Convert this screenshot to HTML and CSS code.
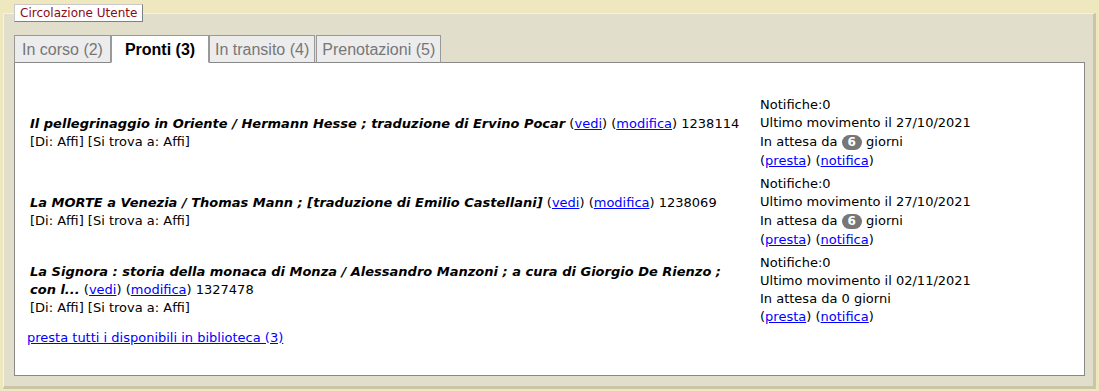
FILE: index.html
```html
<!DOCTYPE html>
<html lang="it">
<head>
  <meta charset="UTF-8" />
  <title>Circolazione Utente</title>
  <link rel="stylesheet" href="styles.css">
</head>
<body>
  <fieldset class="box">
    <legend class="box-title">Circolazione Utente</legend>

    <div class="tabs">
      <a class="tab">In corso (2)</a>
      <a class="tab active">Pronti (3)</a>
      <a class="tab">In transito (4)</a>
      <a class="tab">Prenotazioni (5)</a>
    </div>

    <div class="panel">
      <table class="items">
        <tr>
          <td class="item">
            <b><i>Il pellegrinaggio in Oriente / Hermann Hesse ; traduzione di Ervino Pocar</i></b>
            (<a href="#">vedi</a>) (<a href="#">modifica</a>) 1238114<br>
            [Di: Affi] [Si trova a: Affi]
          </td>
          <td class="info">
            Notifiche:0<br>
            Ultimo movimento il 27/10/2021<br>
            <span class="wait">In attesa da <span class="badge">6</span> giorni</span><br>
            (<a href="#">presta</a>) (<a href="#">notifica</a>)
          </td>
        </tr>
        <tr>
          <td class="item">
            <b><i>La MORTE a Venezia / Thomas Mann ; [traduzione di Emilio Castellani]</i></b>
            (<a href="#">vedi</a>) (<a href="#">modifica</a>) 1238069<br>
            [Di: Affi] [Si trova a: Affi]
          </td>
          <td class="info">
            Notifiche:0<br>
            Ultimo movimento il 27/10/2021<br>
            <span class="wait">In attesa da <span class="badge">6</span> giorni</span><br>
            (<a href="#">presta</a>) (<a href="#">notifica</a>)
          </td>
        </tr>
        <tr>
          <td class="item">
            <b><i>La Signora : storia della monaca di Monza / Alessandro Manzoni ; a cura di Giorgio De Rienzo ; <span class="nowrap">con l...</span></i></b>
            (<a href="#">vedi</a>) (<a href="#">modifica</a>) 1327478<br>
            [Di: Affi] [Si trova a: Affi]
          </td>
          <td class="info">
            Notifiche:0<br>
            Ultimo movimento il 02/11/2021<br>
            In attesa da 0 giorni<br>
            (<a href="#">presta</a>) (<a href="#">notifica</a>)
          </td>
        </tr>
      </table>
      <a class="lend-all" href="#">presta tutti i disponibili in biblioteca (3)</a>
    </div>
  </fieldset>
</body>
</html>
```

FILE: styles.css
```css
body {
  margin: 0;
  padding: 4px 3px 3px 3px;
  background-color: #efe8bf;
  font-family: "DejaVu Sans", Verdana, sans-serif;
  font-size: 12px;
  color: #000;
}

a {
  color: #0000ff;
}

.box {
  margin: 0;
  padding: 13px 8px 10px 10px;
  background-color: #e1dfcc;
  border-top: 1px solid #f6f3de;
  border-left: 1px solid #f6f3de;
  border-right: 3px solid #c9c5a6;
  border-bottom: 3px solid #c9c5a6;
}

.box-title {
  padding: 0 5px;
  height: 18px;
  line-height: 17px;
  box-sizing: border-box;
  background-color: #fff;
  color: #8b0a14;
  border-top: 1px solid #c8c8c8;
  border-left: 1px solid #c8c8c8;
  border-right: 1px solid #808080;
  border-bottom: 1px solid #808080;
}

.tabs {
  display: flex;
  position: relative;
  margin-bottom: -1px;
}

.tab {
  box-sizing: border-box;
  min-width: 97px;
  height: 28px;
  padding: 0 5px;
  line-height: 27px;
  text-align: center;
  font-family: "Liberation Sans", Arial, sans-serif;
  font-size: 16px;
  color: #777;
  background-color: #ececec;
  border: 1px solid #999;
  border-bottom-color: #888;
  margin-right: 1px;
  text-decoration: none;
}

.tab.active {
  min-width: 98px;
  margin-left: -1px;
  margin-right: 0;
  font-weight: bold;
  color: #000;
  background-color: #fff;
  border-left-color: #999;
  border-bottom-color: #fff;
}

.panel {
  background-color: #fff;
  border: 1px solid #888;
  padding: 31px 12px 28px 12px;
  font-size: 13px;
}

.items {
  border-collapse: separate;
  border-spacing: 0 1px;
  width: 100%;
  margin-top: -1px;
}

.items td {
  padding: 2px 3px;
  line-height: 18px;
}

.item {
  width: 724px;
  vertical-align: middle;
}

.nowrap {
  white-space: nowrap;
}

.info {
  vertical-align: top;
  padding-left: 3px;
}

.wait {
  display: inline-block;
  line-height: 20px;
}

.badge {
  display: inline-block;
  padding: 0 6px;
  line-height: 15px;
  border-radius: 8px;
  background-color: #777;
  color: #fff;
  font-weight: bold;
  font-size: 12px;
  vertical-align: middle;
}

.lend-all {
  display: block;
  line-height: 18px;
}
```
